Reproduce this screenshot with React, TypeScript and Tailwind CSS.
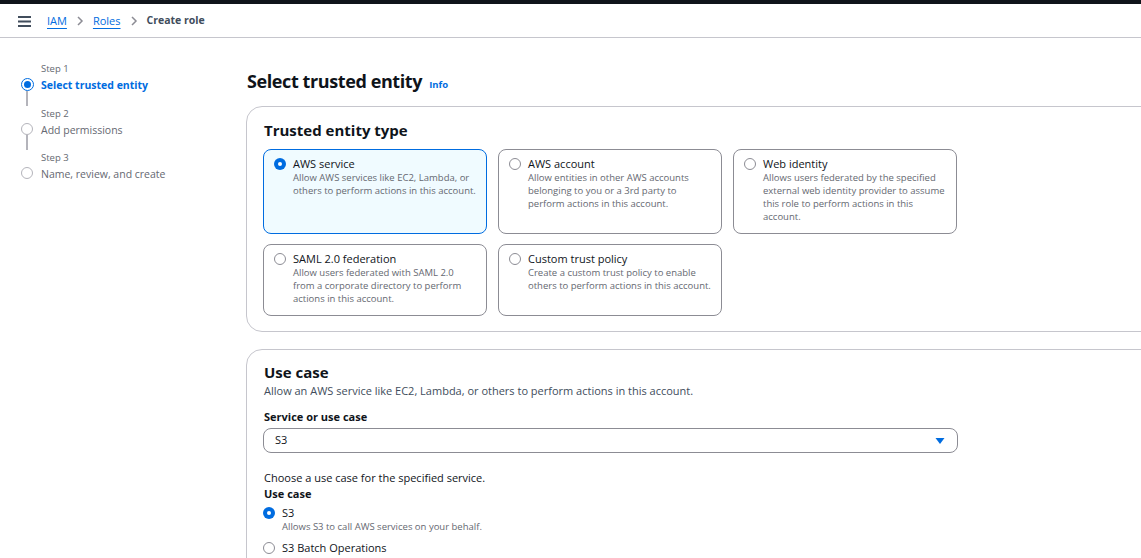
import React from "react";

const font = { fontFamily: "'Open Sans', 'Noto Sans', sans-serif" };

// descriptions are split the way the console wraps them
const entityTypes = [
  {
    title: "AWS service",
    desc: ["Allow AWS services like EC2, Lambda, or", "others to perform actions in this account."],
    selected: true,
  },
  {
    title: "AWS account",
    desc: ["Allow entities in other AWS accounts", "belonging to you or a 3rd party to", "perform actions in this account."],
  },
  {
    title: "Web identity",
    desc: [
      "Allows users federated by the specified",
      "external web identity provider to assume",
      "this role to perform actions in this",
      "account.",
    ],
  },
  {
    title: "SAML 2.0 federation",
    desc: ["Allow users federated with SAML 2.0", "from a corporate directory to perform", "actions in this account."],
  },
  {
    title: "Custom trust policy",
    desc: ["Create a custom trust policy to enable", "others to perform actions in this account."],
  },
];

const steps = [
  { step: "Step 1", label: "Select trusted entity", active: true },
  { step: "Step 2", label: "Add permissions" },
  { step: "Step 3", label: "Name, review, and create" },
];

function Radio({ checked }: { checked?: boolean }) {
  return checked ? (
    <span className="mt-[1px] flex h-[12px] w-[12px] shrink-0 items-center justify-center rounded-full bg-[#006ce0]">
      <span className="h-[4px] w-[4px] rounded-full bg-white" />
    </span>
  ) : (
    <span className="mt-[1px] h-[12px] w-[12px] shrink-0 rounded-full border-[1.5px] border-[#8c8c94] bg-white" />
  );
}

function Chevron() {
  return (
    <svg width="8" height="10" viewBox="0 0 8 10">
      <path d="M2 1l4 4-4 4" fill="none" stroke="#8c8c94" strokeWidth="1.5" />
    </svg>
  );
}

export default function App() {
  return (
    <div className="h-[558px] w-[1141px] overflow-hidden bg-white text-[#0f141a]" style={font}>
      <div className="h-[4px] bg-[#0f141a]" />
      <header className="flex h-[34px] items-center border-b border-[#c6c6cd] pl-[18px] pt-[1px]">
        <svg width="13" height="11" viewBox="0 0 13 11" className="mr-[16px]">
          <rect x="0" y="0" width="13" height="2" fill="#414d5c" />
          <rect x="0" y="4.5" width="13" height="2" fill="#414d5c" />
          <rect x="0" y="9" width="13" height="2" fill="#414d5c" />
        </svg>
        <nav className="flex items-center gap-[9px] text-[11px]">
          <span className="text-[#006ce0] underline underline-offset-[3px]">IAM</span>
          <Chevron />
          <span className="text-[#006ce0] underline underline-offset-[3px]">Roles</span>
          <Chevron />
          <span className="text-[10.5px] font-bold text-[#414d5c]">Create role</span>
        </nav>
      </header>

      <div className="flex">
        <aside className="w-[246px] shrink-0 pl-[21px] pt-[23px]">
          {steps.map((s, i) => (
            <div key={s.step} className="flex h-[44.5px]">
              <div className="flex w-[12px] flex-col items-center">
                <div className="h-[17px]" />
                {s.active ? (
                  <span className="flex h-[13px] w-[13px] shrink-0 items-center justify-center rounded-full border-[1.5px] border-[#006ce0] bg-white">
                    <span className="h-[7px] w-[7px] rounded-full bg-[#006ce0]" />
                  </span>
                ) : (
                  <span className="h-[12px] w-[12px] shrink-0 rounded-full border-[1.5px] border-[#b4b4bb]" />
                )}
                {i < steps.length - 1 && <div className="w-[2px] flex-1 bg-[#b4b4bb]" />}
              </div>
              <div className="ml-[8px]">
                <div className="h-[16px] text-[9.5px] leading-[16px] text-[#656871]">{s.step}</div>
                <div
                  className={
                    s.active
                      ? "pt-[1px] text-[10.5px] font-bold leading-[14px] text-[#006ce0]"
                      : "pt-[1px] text-[10.5px] leading-[14px] text-[#656871]"
                  }
                >
                  {s.label}
                </div>
              </div>
            </div>
          ))}
        </aside>

        <main className="w-[940px] shrink-0 pt-[30px]">
          <div className="flex items-baseline gap-[7px] pl-[1px]">
            <h1 className="text-[18px] font-bold leading-[26px] tracking-[-0.4px]">Select trusted entity</h1>
            <span className="text-[9.5px] font-bold text-[#006ce0]">Info</span>
          </div>

          <section className="mt-[12px] rounded-[16px] border border-[#c6c6cd] pb-[15px] pl-[16px] pt-[13px]">
            <h2 className="pl-[1px] text-[15px] font-bold leading-[20px]">Trusted entity type</h2>
            <div className="mt-[9px] grid grid-cols-[224px_224px_224px] gap-x-[11px] gap-y-[10px]">
              {entityTypes.map((t) => (
                <div
                  key={t.title}
                  className={
                    t.selected
                      ? "flex gap-[7px] overflow-hidden rounded-[8px] border border-[#006ce0] bg-[#f0fbff] pb-[10px] pl-[10px] pr-[6px] pt-[7px]"
                      : "flex gap-[7px] overflow-hidden rounded-[8px] border border-[#8c8c94] bg-white pb-[10px] pl-[10px] pr-[6px] pt-[7px]"
                  }
                >
                  <Radio checked={t.selected} />
                  <div>
                    <div className="text-[11px] leading-[14px]">{t.title}</div>
                    <div className="whitespace-nowrap text-[9.5px] leading-[13px] text-[#656871]">
                      {t.desc.map((line) => (
                        <div key={line}>{line}</div>
                      ))}
                    </div>
                  </div>
                </div>
              ))}
            </div>
          </section>

          <section className="mt-[17px] rounded-t-[16px] border border-[#c6c6cd] pl-[16px] pt-[12px]">
            <h2 className="pl-[1px] text-[15px] font-bold leading-[20px]">Use case</h2>
            <p className="mt-[1px] pl-[1px] text-[11px] leading-[16px] text-[#414d5c]">
              Allow an AWS service like EC2, Lambda, or others to perform actions in this account.
            </p>
            <div className="mt-[10px] pl-[1px] text-[11px] font-bold leading-[16px]">Service or use case</div>
            <div className="mt-[3px] flex h-[25px] w-[695px] items-center justify-between rounded-[8px] border border-[#8c8c94] pl-[11px] pr-[12px]">
              <span className="text-[11px]">S3</span>
              <svg width="10" height="8" viewBox="0 0 10 8">
                <path d="M0.5 1h9L5 7z" fill="#006ce0" />
              </svg>
            </div>
            <p className="mt-[17px] pl-[1px] text-[11px] leading-[16px]">Choose a use case for the specified service.</p>
            <div className="pl-[1px] text-[11px] font-bold leading-[16px]">Use case</div>
            <div className="mt-[4px] flex gap-[7px]">
              <Radio checked />
              <div>
                <div className="text-[11px] leading-[14px]">S3</div>
                <div className="text-[9.5px] leading-[13px] text-[#656871]">Allows S3 to call AWS services on your behalf.</div>
              </div>
            </div>
            <div className="mt-[8px] flex gap-[7px]">
              <Radio />
              <div>
                <div className="text-[11px] leading-[14px]">S3 Batch Operations</div>
                <div className="text-[9.5px] leading-[13px] text-[#656871]">
                  Allows S3 Batch Operations to call AWS services on your behalf.
                </div>
              </div>
            </div>
          </section>
        </main>
      </div>
    </div>
  );
}
